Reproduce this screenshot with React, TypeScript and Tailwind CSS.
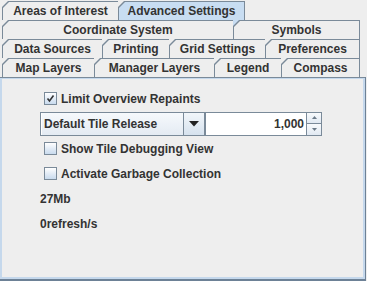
import React from "react";

const FONT = { fontFamily: '"Liberation Sans", Arial, sans-serif' };

function Tab({
  label,
  w,
  selected = false,
  last = false,
  corner,
}: {
  label: string;
  w: number;
  selected?: boolean;
  last?: boolean;
  corner?: string;
}) {
  return (
    <div className="h-[19px] shrink-0" style={{ width: w, background: corner ?? "transparent" }}>
      <div
        className={`h-full w-full bg-[#7a8a99] pt-px pl-px ${last ? "pr-px" : ""} [clip-path:polygon(6px_0,100%_0,100%_100%,0_100%,0_6px)]`}
      >
        <div
          className={`flex h-full w-full items-center justify-center ${
            selected ? "bg-[#c8ddf2]" : "bg-[#eeeeee]"
          } [clip-path:polygon(6px_0,100%_0,100%_100%,0_100%,0_6px)] text-[12px] font-bold leading-[18px] text-[#333333]`}
        >
          {label}
        </div>
      </div>
    </div>
  );
}

function CheckBox({ checked }: { checked?: boolean }) {
  return (
    <div className="flex h-[13px] w-[13px] items-center justify-center border border-[#7a8a99] bg-gradient-to-b from-[#ffffff] via-[#e3ecf6] to-[#c9dbee]">
      {checked && (
        <svg width="9" height="9" viewBox="0 0 9 9">
          <path d="M1.5 4.5 L3.5 7 L7.5 1.5" stroke="#333333" strokeWidth="1.6" fill="none" />
        </svg>
      )}
    </div>
  );
}

export default function App() {
  return (
    <div className="h-[281px] w-[367px] overflow-hidden bg-[#eeeeee]" style={FONT}>
      <div className="flex flex-col pl-[2px] pt-px">
        <div className="flex">
          <Tab label="Areas of Interest" w={116} />
          <Tab label="Advanced Settings" w={127} selected last />
        </div>
        <div className="flex">
          <Tab label="Coordinate System" w={231} />
          <Tab label="Symbols" w={127} last corner="#c8ddf2" />
        </div>
        <div className="flex">
          <Tab label="Data Sources" w={100} />
          <Tab label="Printing" w={67} />
          <Tab label="Grid Settings" w={96} />
          <Tab label="Preferences" w={95} last />
        </div>
        <div className="flex">
          <Tab label="Map Layers" w={92} />
          <Tab label="Manager Layers" w={120} />
          <Tab label="Legend" w={67} />
          <Tab label="Compass" w={79} last />
        </div>
      </div>
      <div className="h-[204px] w-[366px] border-r border-b-2 border-[#6d8196]">
        <div className="flex h-full w-full flex-col border-t border-[#7a8a99]">
          <div className="flex h-full w-full flex-col border-t border-l-2 border-r-2 border-b-2 border-[#c5d8ec] pl-[38px] pt-[7px] text-[12px] font-bold text-[#333333]">
            <div className="flex h-[25px] items-center pl-[4px]">
              <CheckBox checked />
              <span className="ml-[4px]">Limit Overview Repaints</span>
            </div>
            <div className="flex h-[25px] items-center">
              <div className="flex h-[24px] w-[165px] border border-[#7a8a99] bg-gradient-to-b from-[#f6f9fc] to-[#e4ebf3]">
                <div className="flex flex-1 items-center border-l border-[#ffffff] pl-[2px]">Default Tile Release</div>
                <div className="flex w-[21px] items-center justify-center border-l border-[#7a8a99] bg-gradient-to-b from-[#f2f6fa] to-[#d6e2ee]">
                  <svg width="10" height="6" viewBox="0 0 10 6">
                    <path d="M0 0 H10 L5 5.5 Z" fill="#222222" />
                  </svg>
                </div>
              </div>
              <div className="flex h-[24px] w-[101px] items-center justify-end border border-[#7a8a99] border-r-0 bg-white pr-[2px] font-bold">
                1,000
              </div>
              <div className="flex h-[24px] w-[16px] flex-col">
                <div className="flex h-[12px] items-center justify-center border border-[#7a8a99] bg-gradient-to-b from-[#f8fafc] to-[#e1e9f2]">
                  <svg width="5" height="3" viewBox="0 0 5 3">
                    <path d="M0 3 H5 L2.5 0 Z" fill="#6b7a88" />
                  </svg>
                </div>
                <div className="flex h-[12px] items-center justify-center border border-t-0 border-[#7a8a99] bg-gradient-to-b from-[#f8fafc] to-[#e1e9f2]">
                  <svg width="5" height="3" viewBox="0 0 5 3">
                    <path d="M0 0 H5 L2.5 3 Z" fill="#6b7a88" />
                  </svg>
                </div>
              </div>
            </div>
            <div className="flex h-[25px] items-center pl-[4px]">
              <CheckBox />
              <span className="ml-[4px]">Show Tile Debugging View</span>
            </div>
            <div className="flex h-[25px] items-center pl-[4px]">
              <CheckBox />
              <span className="ml-[4px]">Activate Garbage Collection</span>
            </div>
            <div className="flex h-[25px] items-center">27Mb</div>
            <div className="flex h-[25px] items-center">0refresh/s</div>
          </div>
        </div>
      </div>
    </div>
  );
}
